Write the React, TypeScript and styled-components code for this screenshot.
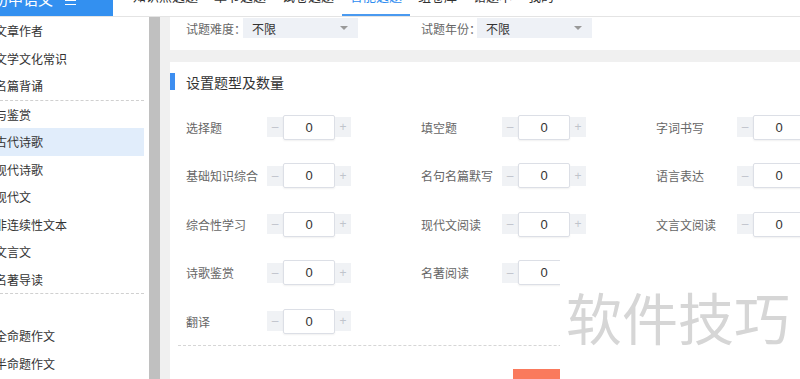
import styled, { createGlobalStyle } from 'styled-components';

const GlobalStyle = createGlobalStyle`
  html, body {
    margin: 0;
    padding: 0;
    width: 800px;
    height: 379px;
    overflow: hidden;
    background: #fff;
    font-family: "Noto Sans CJK SC", "Noto Sans", sans-serif;
  }
  * { box-sizing: border-box; }
`;

const navItems = ['知识点选题', '章节选题', '试卷选题', '智能选题', '组卷库', '错题本', '我的'];

const sideGroups: string[][] = [
    ['文章作者', '文学文化常识', '名篇背诵'],
    ['与鉴赏', '古代诗歌', '现代诗歌', '现代文', '非连续性文本', '文言文', '名著导读'],
    ['全命题作文', '半命题作文'],
];

// empty string = cell hidden under the watermark
const questionTypes = [
    '选择题', '填空题', '字词书写',
    '基础知识综合', '名句名篇默写', '语言表达',
    '综合性学习', '现代文阅读', '文言文阅读',
    '诗歌鉴赏', '名著阅读', '',
    '翻译',
];

const Page = styled.div`
  position: relative;
  width: 800px;
  height: 379px;
  overflow: hidden;
`;

const Shell = styled.div`
  margin-top: -30px;
  display: flex;
  flex-direction: column;
  height: 409px;
`;

const Header = styled.header`
  display: flex;
  height: 47px;
  border-bottom: 1px solid #e4e4e4;
  flex-shrink: 0;
`;

const Logo = styled.div`
  width: 113px;
  background: #3390f0;
  color: #fff;
  display: flex;
  align-items: flex-end;
  padding-bottom: 7px;
  font-size: 15px;
  line-height: 20px;
  gap: 12px;
  span {
    margin-left: -7px;
  }
`;

const Burger = styled.div`
  display: flex;
  flex-direction: column;
  gap: 3px;
  margin-bottom: 4px;
  i {
    display: block;
    width: 11px;
    height: 1.5px;
    background: #fff;
  }
`;

const Nav = styled.nav`
  display: flex;
  padding-left: 12px;
  height: 100%;
`;

const NavItem = styled.div<{ $active?: boolean }>`
  display: flex;
  align-items: flex-end;
  padding: 0 8px 8px;
  font-size: 13px;
  line-height: 20px;
  color: ${(p) => (p.$active ? '#2d8cf0' : '#333')};
  border-bottom: 2px solid ${(p) => (p.$active ? '#4a9af0' : 'transparent')};
`;

const Body = styled.div`
  display: flex;
  flex: 1;
  min-height: 0;
`;

const Sidebar = styled.aside`
  display: flex;
  width: 160px;
  flex-shrink: 0;
`;

const SideList = styled.div`
  width: 144px;
  overflow: hidden;
`;

const SideGroup = styled.div<{ $pad?: boolean; $dashed?: boolean }>`
  padding-top: ${(p) => (p.$pad ? '28px' : '0')};
  border-bottom: ${(p) => (p.$dashed ? '1px dashed #d0d0d0' : 'none')};
`;

const SideItem = styled.div<{ $active?: boolean }>`
  height: 27.5px;
  line-height: 27.5px;
  font-size: 12px;
  color: #333;
  white-space: nowrap;
  text-indent: -5px;
  background: ${(p) => (p.$active ? '#e1edfb' : 'transparent')};
`;

const ScrollTrack = styled.div`
  margin-left: 5px;
  width: 11px;
  background: #c0c0c0;
`;

const Content = styled.main`
  flex: 1;
  background: #f0f0f0;
  padding-left: 10px;
  display: flex;
  flex-direction: column;
  gap: 12px;
  overflow: hidden;
`;

const FilterPanel = styled.section`
  background: #fff;
  height: 33px;
  flex-shrink: 0;
  display: flex;
  padding: 1px 0 0 16px;
`;

const FilterItem = styled.div`
  width: 235px;
  display: flex;
  align-items: center;
  height: 20px;
`;

const FieldLabel = styled.span<{ $w: number }>`
  width: ${(p) => p.$w}px;
  flex-shrink: 0;
  font-size: 12px;
  color: #666;
  white-space: nowrap;
`;

const Select = styled.div`
  width: 115px;
  height: 20px;
  background: #eef1f6;
  display: flex;
  align-items: center;
  justify-content: space-between;
  padding: 0 9px;
  font-size: 12px;
  color: #333;
`;

const Caret = styled.i`
  width: 0;
  height: 0;
  border-left: 4px solid transparent;
  border-right: 4px solid transparent;
  border-top: 4px solid #999;
  margin-right: 1px;
`;

const TypePanel = styled.section`
  flex: 1 0 auto;
  background: #fff;
  display: flex;
  flex-direction: column;
`;

const Heading = styled.h3`
  margin: 11px 0 0;
  height: 17px;
  display: flex;
  align-items: center;
  gap: 11px;
  font-size: 14px;
  font-weight: normal;
  color: #333;
  &::before {
    content: '';
    width: 5px;
    height: 17px;
    background: #3d8ef0;
  }
`;

const TypeGrid = styled.div`
  margin-top: 12.75px;
  padding-left: 16px;
  display: grid;
  grid-template-columns: repeat(3, 235px);
  grid-auto-rows: 48.5px;
`;

const TypeCell = styled.div`
  display: flex;
  align-items: center;
`;

const StepBtn = styled.span`
  width: 16px;
  height: 20px;
  background: #f0f2f5;
  color: #c0c4cc;
  font-size: 12px;
  display: flex;
  align-items: center;
  justify-content: center;
  font-family: "Liberation Sans", sans-serif;
`;

const StepInput = styled.span`
  width: 52px;
  height: 25px;
  border: 1px solid #dcdfe6;
  border-radius: 2px;
  box-shadow: 0 1px 2px rgba(0, 0, 0, 0.06);
  display: flex;
  align-items: center;
  justify-content: center;
  font-family: "Liberation Sans", sans-serif;
  font-size: 13px;
  color: #333;
`;

const Divider = styled.div`
  margin: 0 8px;
  border-top: 1px dashed #d6d6d6;
`;

const Actions = styled.div`
  padding: 23px 0 0 343px;
`;

const StartButton = styled.button`
  width: 120px;
  height: 40px;
  border: none;
  background: #fa7a5d;
  color: #fff;
  font-size: 14px;
  font-family: inherit;
`;

const Watermark = styled.div`
  position: absolute;
  left: 560px;
  top: 248px;
  width: 240px;
  height: 131px;
  background: #fff;
  padding: 40px 0 0 6px;
  font-size: 56px;
  line-height: 56px;
  color: #d6d6d6;
  white-space: nowrap;
`;

const Stepper = () => (
    <>
        <StepBtn>–</StepBtn>
        <StepInput>0</StepInput>
        <StepBtn>+</StepBtn>
    </>
);

export default function App() {
    return (
        <Page>
            <GlobalStyle/>
            <Shell>
                <Header>
                    <Logo>
                        <span>初中语文</span>
                        <Burger><i/><i/><i/></Burger>
                    </Logo>
                    <Nav>
                        {navItems.map((n) => (
                            <NavItem key={n} $active={n === '智能选题'}>{n}</NavItem>
                        ))}
                    </Nav>
                </Header>
                <Body>
                    <Sidebar>
                        <SideList>
                            {sideGroups.map((g, gi) => (
                                <SideGroup key={gi} $pad={gi === 2} $dashed={gi < 2}>
                                    {g.map((s) => (
                                        <SideItem key={s} $active={s === '古代诗歌'}>{s}</SideItem>
                                    ))}
                                </SideGroup>
                            ))}
                        </SideList>
                        <ScrollTrack/>
                    </Sidebar>
                    <Content>
                        <FilterPanel>
                            <FilterItem>
                                <FieldLabel $w={57}>试题难度：</FieldLabel>
                                <Select>不限<Caret/></Select>
                            </FilterItem>
                            <FilterItem>
                                <FieldLabel $w={56}>试题年份：</FieldLabel>
                                <Select>不限<Caret/></Select>
                            </FilterItem>
                        </FilterPanel>
                        <TypePanel>
                            <Heading>设置题型及数量</Heading>
                            <TypeGrid>
                                {questionTypes.map((t, i) => (
                                    <TypeCell key={i}>
                                        {t && (
                                            <>
                                                <FieldLabel $w={81}>{t}</FieldLabel>
                                                <Stepper/>
                                            </>
                                        )}
                                    </TypeCell>
                                ))}
                            </TypeGrid>
                            <Divider/>
                            <Actions>
                                <StartButton>开始组卷</StartButton>
                            </Actions>
                        </TypePanel>
                    </Content>
                </Body>
            </Shell>
            <Watermark>软件技巧</Watermark>
        </Page>
    );
}
